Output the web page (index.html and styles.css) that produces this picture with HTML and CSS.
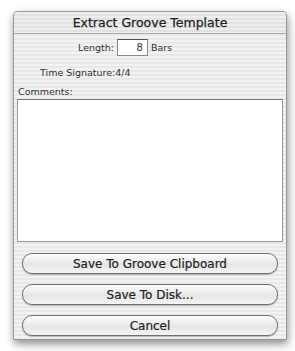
FILE: index.html
```html
<!DOCTYPE html>
<html lang="en">
<head>
    <meta charset="UTF-8">
    <title>Extract Groove Template</title>
    <link rel="stylesheet" href="styles.css">
</head>
<body>
    <div class="window">
        <div class="titlebar">Extract Groove Template</div>

        <div class="content">
            <div class="length-row">
                <label for="length">Length:</label>
                <input type="text" id="length" value="8">
                <span>Bars</span>
            </div>

            <div class="time-sig">Time Signature:4/4</div>

            <div class="comments-label">Comments:</div>
            <textarea class="comments" id="comments"></textarea>

            <div class="buttons">
                <button class="pill">Save To Groove Clipboard</button>
                <button class="pill">Save To Disk...</button>
                <button class="pill">Cancel</button>
            </div>
        </div>
    </div>
</body>
</html>
```

FILE: styles.css
```css
* {
    margin: 0;
    padding: 0;
    box-sizing: border-box;
    font-family: "DejaVu Sans", sans-serif;
}

body {
    background: #fff;
    width: 295px;
    height: 351px;
    overflow: hidden;
}

.window {
    margin: 11px 0 0 13px;
    width: 274px;
    height: 329px;
    border: 1px solid #9a9a9a;
    border-radius: 4px 4px 0 0;
    background: repeating-linear-gradient(#f2f2f2 0, #f2f2f2 2px, #e8e8e8 2px, #e8e8e8 4px);
    box-shadow: 1px 4px 8px rgba(0, 0, 0, 0.45);
    display: flex;
    flex-direction: column;
}

.titlebar {
    height: 22px;
    line-height: 22px;
    text-align: center;
    font-size: 12.5px;
    color: #222;
    -webkit-text-stroke: 0.25px #222;
    border-bottom: 1px solid #a8a8a8;
    border-radius: 4px 4px 0 0;
    background: repeating-linear-gradient(#eeeeee 0, #eeeeee 2px, #e2e2e2 2px, #e2e2e2 4px);
}

.content {
    flex: 1;
    display: flex;
    flex-direction: column;
    padding: 4px 4px 0 3px;
    font-size: 9.5px;
    color: #333;
}

.length-row {
    display: flex;
    align-items: center;
    gap: 3px;
    padding-left: 61px;
    height: 18px;
}

.length-row input {
    width: 31px;
    height: 17px;
    border: 1px solid #888;
    border-top-color: #555;
    background: #fff;
    text-align: right;
    padding-right: 4px;
    font-size: 10px;
    color: #333;
}

.time-sig {
    padding-left: 23px;
    margin-top: 11px;
}

.comments-label {
    margin-top: 8px;
    padding-left: 1px;
}

.comments {
    margin-top: 2px;
    width: 266px;
    height: 143px;
    border: 1px solid #999;
    border-top-color: #777;
    background: #fff;
    resize: none;
}

.buttons {
    display: flex;
    flex-direction: column;
    gap: 10px;
    padding: 11px 4px 0 5px;
}

.pill {
    height: 21px;
    border: 1px solid #6e6e6e;
    border-radius: 10px;
    background: linear-gradient(#fdfdfd, #e6e6e6 55%, #f4f4f4);
    box-shadow: 0 1px 1px rgba(0, 0, 0, 0.25);
    font-size: 12px;
    color: #222;
    -webkit-text-stroke: 0.2px #222;
}
```
